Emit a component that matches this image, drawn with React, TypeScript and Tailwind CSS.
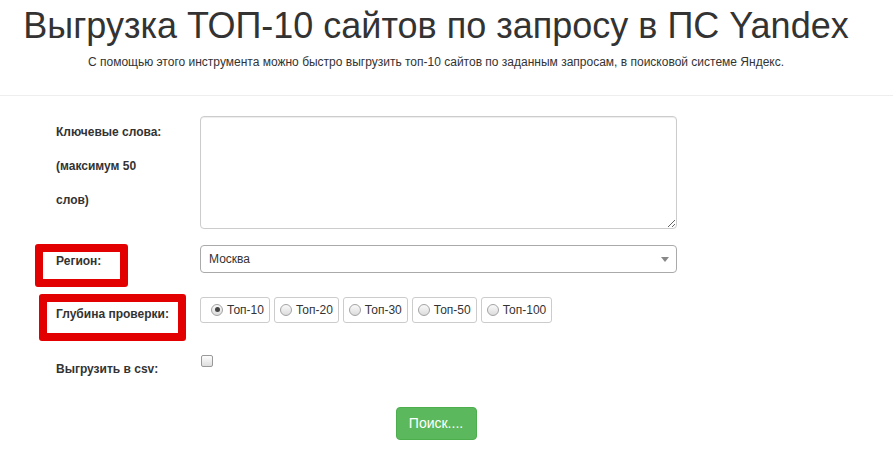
import React, { useState } from 'react';

const options = ['Топ-10', 'Топ-20', 'Топ-30', 'Топ-50', 'Топ-100'];

const Radio = ({ checked }: { checked: boolean }) => (
  <span className="relative inline-flex h-[12px] w-[12px] shrink-0 items-center justify-center rounded-full border border-[#a3a3a3] bg-gradient-to-b from-[#fafafa] to-[#dcdcdc]">
    {checked && <span className="h-[5px] w-[5px] rounded-full bg-[#444]" />}
  </span>
);

export default function App() {
  const [depth, setDepth] = useState('Топ-10');

  return (
    <div className="min-h-screen bg-white font-['Liberation_Sans',Arial,sans-serif] text-[#333]">
      <div className="w-[872px] text-center">
        <h1 className="pt-[6px] text-[36px] leading-[1.1] font-normal">
          Выгрузка ТОП-10 сайтов по запросу в ПС Yandex
        </h1>
        <p className="mt-[8px] text-[12px] leading-[17px]">
          С помощью этого инструмента можно быстро выгрузить топ-10 сайтов по заданным запросам, в поисковой системе Яндекс.
        </p>
      </div>

      <div className="mt-[24px] h-px w-full bg-[#eee]" />

      <form className="relative w-[872px] pt-[19px] text-[12px]">
        {/* Ключевые слова */}
        <div className="flex pl-[56px]">
          <label className="w-[144px] whitespace-nowrap font-bold leading-[34px]">
            Ключевые слова:
            <br />
            (максимум 50
            <br />
            слов)
          </label>
          <textarea className="mt-[1px] h-[113px] w-[477px] rounded-[4px] border border-[#ccc] shadow-[inset_0_1px_1px_rgba(0,0,0,0.075)] outline-none" />
        </div>

        {/* Регион */}
        <div className="mt-[15px] flex pl-[56px]">
          <label className="w-[144px] font-bold leading-[34px]">Регион:</label>
          <div className="relative mt-[1px] flex h-[28px] w-[477px] items-center rounded-[4px] border border-[#aaa] pl-[8px]">
            <span>Москва</span>
            <span className="absolute right-[7px] top-[11px] h-0 w-0 border-x-[4px] border-t-[5px] border-x-transparent border-t-[#888]" />
          </div>
        </div>

        {/* Глубина проверки */}
        <div className="mt-[18px] flex pl-[56px]">
          <label className="w-[144px] pt-[1px] font-bold leading-[34px]">Глубина проверки:</label>
          <div className="mt-[1px] flex gap-[4px]">
            {options.map((o, i) => (
              <button
                key={o}
                type="button"
                onClick={() => setDepth(o)}
                className={`flex h-[26px] items-center gap-[4px] rounded-[3px] border border-[#ccc] pr-[5px] ${
                  i === 0 ? 'pl-[10px]' : 'pl-[5px]'
                }`}
              >
                <Radio checked={depth === o} />
                <span>{o}</span>
              </button>
            ))}
          </div>
        </div>

        {/* Выгрузить в csv */}
        <div className="mt-[20px] flex pl-[56px]">
          <label className="w-[144px] pt-[1px] font-bold leading-[34px]">Выгрузить в csv:</label>
          <span className="ml-[1px] mt-[4px] h-[12px] w-[12px] rounded-[2px] border border-[#999] bg-gradient-to-b from-[#fdfdfd] to-[#dedede]" />
        </div>

        <div className="mt-[21px] flex justify-center">
          <button
            type="button"
            className="h-[33px] w-[81px] rounded-[4px] border border-[#4cae4c] bg-[#5cb85c] text-[14px] text-white"
          >
            Поиск....
          </button>
        </div>

        {/* red annotation frames */}
        <div className="pointer-events-none absolute left-[35px] top-[148px] h-[43px] w-[93px] rounded-[3px] border-[8px] border-[#e30000]" />
        <div className="pointer-events-none absolute left-[39px] top-[198px] h-[47px] w-[147px] rounded-[3px] border-[8px] border-[#e30000]" />
      </form>
    </div>
  );
}
